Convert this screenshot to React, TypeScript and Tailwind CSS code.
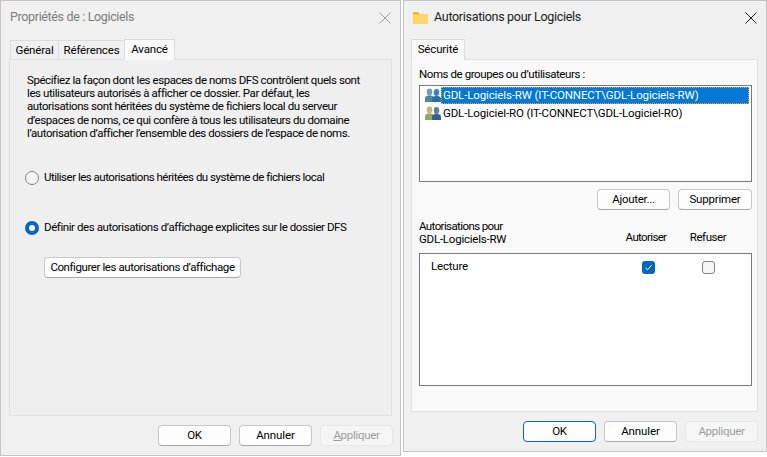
import React from 'react';

const font = 'font-["Roboto",Arial,sans-serif]';

const CloseIcon = ({ color }: { color: string }) => (
  <svg width="12" height="12" viewBox="0 0 12 12" fill="none" stroke={color} strokeWidth="1">
    <path d="M0.5 0.5 L11.5 11.5 M11.5 0.5 L0.5 11.5" />
  </svg>
);

const FolderIcon = () => (
  <svg width="15" height="12" viewBox="0 0 15 12">
    <path d="M0 1 Q0 0 1 0 H5 L6.5 2 H0 Z" fill="#f0b429" />
    <rect x="0" y="2" width="15" height="10" fill="#fcd667" />
    <rect x="0" y="2" width="6" height="1" fill="#f5c542" />
  </svg>
);

// two people side by side, colours change between the two rows
const UsersIcon = ({ back, backBody, front, frontBody }: { back: string; backBody: string; front: string; frontBody: string }) => (
  <svg width="16" height="15" viewBox="0 0 16 15">
    <ellipse cx="4.5" cy="4" rx="2.8" ry="3.4" fill={back} />
    <path d="M0 14 V10.5 Q0 8 3 7.5 H6 Q9 8 9 10.5 V14 Z" fill={backBody} />
    <ellipse cx="11.5" cy="4.5" rx="2.8" ry="3.4" fill={front} />
    <path d="M7 14 V11 Q7 8.5 10 8 H13 Q16 8.5 16 11 V14 Z" fill={frontBody} />
  </svg>
);

const Btn = ({ children, w = 'w-[73px]', variant }: { children: React.ReactNode; w?: string; variant?: 'primary' | 'disabled' }) => (
  <div
    className={`${w} flex h-[21px] items-center justify-center whitespace-nowrap rounded-[4px] border ${
      variant === 'primary'
        ? 'border-[#0067c0] bg-[#fdfdfd] text-black'
        : variant === 'disabled'
          ? 'border-[#e8e8e8] bg-[#f5f5f5] text-[#9d9d9d]'
          : 'border-[#c8c8c8] border-b-[#a8a8a8] bg-[#fdfdfd] text-black'
    }`}
  >
    {children}
  </div>
);

const Tab = ({ children, w, active }: { children: React.ReactNode; w: string; active?: boolean }) => (
  <div
    className={`${w} flex items-center justify-center border border-b-0 border-[#dcdcdc] tracking-[-0.15px] ${
      active ? 'relative top-[1px] z-10 h-[21px] bg-[#f9f9f9]' : '-mr-px mt-[2px] h-[19px] bg-[#f0f0f0] pt-[2px]'
    }`}
  >
    {children}
  </div>
);

const Radio = ({ checked }: { checked?: boolean }) =>
  checked ? (
    <span className="flex h-[14px] w-[14px] items-center justify-center rounded-full bg-[#0067c0]">
      <span className="h-[6px] w-[6px] rounded-full bg-white" />
    </span>
  ) : (
    <span className="h-[14px] w-[14px] rounded-full border border-[#858585] bg-[#f5f5f5]" />
  );

const PropertiesWindow = () => (
  <div className="flex h-[456px] w-[401px] flex-col border border-[#c4c4c4] bg-[#f0f0f0]">
    <div className="flex h-[33px] items-center justify-between px-[9px]">
      <span className="text-[12.5px] tracking-[-0.35px] text-[#7d7d7d]">Propriétés de : Logiciels</span>
      <CloseIcon color="#a0a0a0" />
    </div>
    <div className="flex h-[25px] items-end pl-[9px]">
      <Tab w="w-[49px]">Général</Tab>
      <Tab w="w-[67px]">Références</Tab>
      <Tab w="w-[51px]" active>Avancé</Tab>
    </div>
    <div className="ml-[8px] w-[383px] flex-1 border border-[#e2e2e2] bg-[#efefef] pl-[16px] pt-[14px]">
      <p className="whitespace-nowrap pl-px leading-[13.2px]">
        Spécifiez la façon dont les espaces de noms DFS contrôlent quels sont
        <br />
        les utilisateurs autorisés à afficher ce dossier. Par défaut, les
        <br />
        autorisations sont héritées du système de fichiers local du serveur
        <br />
        d’espaces de noms, ce qui confère à tous les utilisateurs du domaine
        <br />
        l’autorisation d’afficher l’ensemble des dossiers de l’espace de noms.
      </p>
      <div className="-ml-px mt-[31px] flex h-[14px] items-center gap-[5px]">
        <Radio />
        <span className="tracking-[-0.5px]">Utiliser les autorisations héritées du système de fichiers local</span>
      </div>
      <div className="-ml-px mt-[36px] flex h-[14px] items-center gap-[5px]">
        <Radio checked />
        <span>Définir des autorisations d’affichage explicites sur le dossier DFS</span>
      </div>
      <div className="ml-[18px] mt-[22px]">
        <Btn w="w-[197px]">Configurer les autorisations d’affichage</Btn>
      </div>
    </div>
    <div className="flex h-[39px] items-center justify-end gap-[8px] pr-[7px]">
      <Btn>OK</Btn>
      <Btn><span className="tracking-[-0.1px]">Annuler</span></Btn>
      <Btn variant="disabled">
        <span className="tracking-[-0.3px]">
          <span className="underline">A</span>ppliquer
        </span>
      </Btn>
    </div>
  </div>
);

const PermissionsWindow = () => (
  <div className="ml-[2px] flex h-[452px] w-[364px] flex-col border border-[#c4c4c4] bg-[#f0f0f0]">
    <div className="flex h-[33px] items-center justify-between px-[9px]">
      <div className="flex items-center gap-[6px]">
        <FolderIcon />
        <span className="text-[12.5px] tracking-[-0.3px] text-[#1a1a1a]">Autorisations pour Logiciels</span>
      </div>
      <CloseIcon color="#222222" />
    </div>
    <div className="flex h-[25px] items-end pl-[7px]">
      <Tab w="w-[54px]" active>Sécurité</Tab>
    </div>
    <div className="ml-[7px] w-[347px] flex-1 border border-[#e2e2e2] bg-[#f9f9f9] px-[7px] pt-[8px]">
      <div className="h-[13px] leading-[13px]">Noms de groupes ou d’utilisateurs :</div>
      <div className="mt-[4px] h-[97px] w-[333px] border border-[#7a7a7a] bg-white pl-[5px] pt-px tracking-[-0.13px]">
        <div className="flex h-[17px] items-center">
          <UsersIcon back="#6fa0b8" backBody="#4a86a8" front="#3f82b8" frontBody="#2a6ca6" />
          <span className="w-[308px] border border-dotted border-[#f0a040] bg-[#0078d7] pl-px leading-[15px] text-white">
            GDL-Logiciels-RW (IT-CONNECT\GDL-Logiciels-RW)
          </span>
        </div>
        <div className="flex h-[18px] items-center pt-px">
          <UsersIcon back="#c9b277" backBody="#8fa868" front="#5d7f9c" frontBody="#35628c" />
          <span className="pl-[2px]">GDL-Logiciel-RO (IT-CONNECT\GDL-Logiciel-RO)</span>
        </div>
      </div>
      <div className="mt-[7px] flex w-[333px] justify-end gap-[8px]">
        <Btn><span className="tracking-[-0.3px]">Ajouter...</span></Btn>
        <Btn w="w-[74px]"><span className="tracking-[-0.2px]">Supprimer</span></Btn>
      </div>
      <div className="mt-[10px] flex h-[27px] w-[333px] leading-[13px]">
        <div className="w-[196px]">
          <span className="tracking-[-0.6px]">Autorisations pour</span>
          <br />
          <span className="tracking-[-0.22px]">GDL-Logiciels-RW</span>
        </div>
        <div className="w-[62px] pt-[11px] text-center tracking-[-0.65px]">Autoriser</div>
        <div className="w-[62px] pt-[11px] text-center">Refuser</div>
      </div>
      <div className="mt-[6px] h-[133px] w-[333px] border border-[#7a7a7a] bg-white">
        <div className="flex h-[26px] items-center pl-[11px]">
          <span className="w-[211px] tracking-[-0.2px]">Lecture</span>
          <span className="flex h-[13px] w-[13px] items-center justify-center rounded-[3px] bg-[#0067c0]">
            <svg width="9" height="9" viewBox="0 0 9 9" fill="none" stroke="white" strokeWidth="1">
              <path d="M1.5 4.8 L3.6 6.8 L7.5 2.2" />
            </svg>
          </span>
          <span className="ml-[47px] h-[13px] w-[13px] rounded-[3px] border border-[#858585] bg-[#f5f5f5]" />
        </div>
      </div>
    </div>
    <div className="flex h-[39px] items-center justify-end gap-[8px] pr-[8px]">
      <Btn variant="primary">OK</Btn>
      <Btn><span className="tracking-[-0.1px]">Annuler</span></Btn>
      <Btn variant="disabled"><span className="tracking-[-0.3px]">Appliquer</span></Btn>
    </div>
  </div>
);

export default function App() {
  return (
    <div className={`flex h-[457px] w-[767px] items-start overflow-hidden bg-white text-[11.5px] tracking-[-0.42px] text-black ${font}`}>
      <PropertiesWindow />
      <PermissionsWindow />
    </div>
  );
}
